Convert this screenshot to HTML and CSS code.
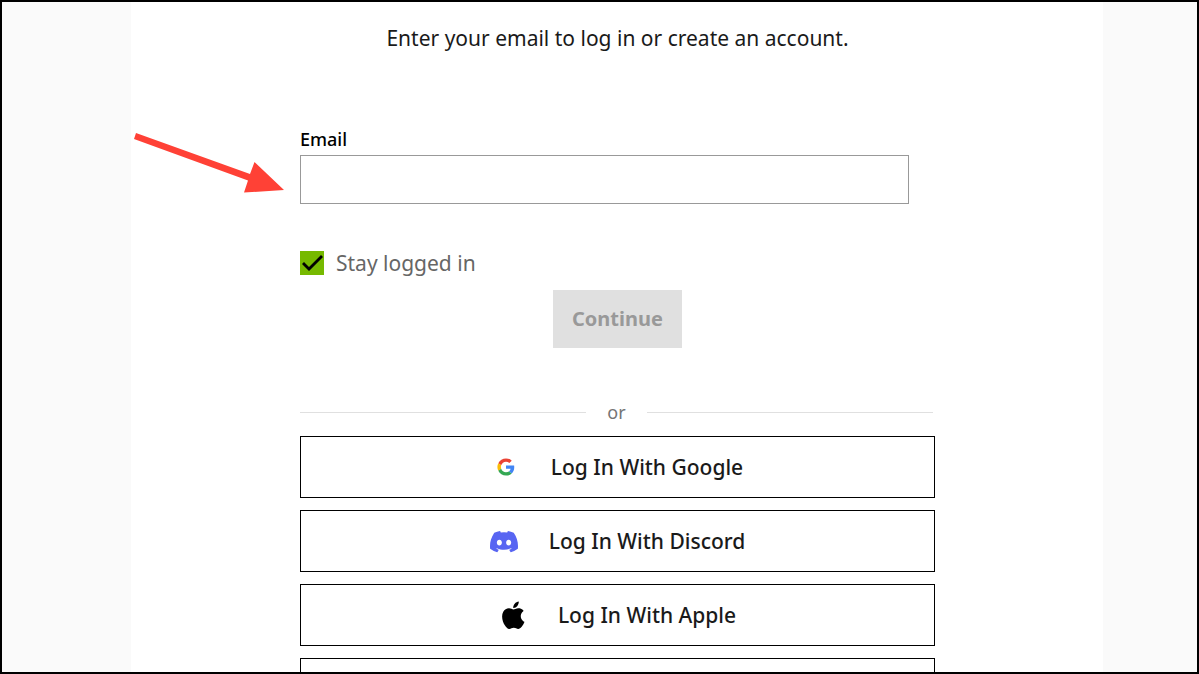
FILE: index.html
```html
<!DOCTYPE html>
<html lang="en">
<head>
    <meta charset="UTF-8">
    <meta name="viewport" content="width=device-width, initial-scale=1.0">
    <title>Log In</title>
    <link rel="stylesheet" href="styles.css">
</head>
<body>
    <main class="panel">
        <p class="intro">Enter your email to log in or create an account.</p>
        <form class="login-form">
            <label class="email-label" for="email">Email</label>
            <input class="email-input" type="email" id="email" name="email">
            <div class="stay">
                <input class="stay-check" type="checkbox" id="stay" name="stay" checked>
                <label class="stay-label" for="stay">Stay logged in</label>
            </div>
            <button class="continue" type="submit" disabled>Continue</button>
        </form>
        <div class="divider">or</div>
        <div class="providers">
            <button class="provider" type="button">
                <svg class="icon" viewBox="-15 -15 78 78" aria-hidden="true">
                    <path fill="#EA4335" d="M24 9.5c3.54 0 6.71 1.22 9.21 3.6l6.85-6.85C35.9 2.38 30.47 0 24 0 14.62 0 6.51 5.38 2.56 13.22l7.98 6.19C12.43 13.72 17.74 9.5 24 9.5z"/>
                    <path fill="#4285F4" d="M46.98 24.55c0-1.57-.15-3.09-.38-4.55H24v9.02h12.94c-.58 2.96-2.26 5.48-4.78 7.18l7.73 6c4.51-4.18 7.09-10.36 7.09-17.65z"/>
                    <path fill="#FBBC05" d="M10.53 28.59c-.48-1.45-.76-2.99-.76-4.59s.27-3.14.76-4.59l-7.98-6.19C.92 16.46 0 20.12 0 24s.92 7.54 2.56 10.78l7.97-6.19z"/>
                    <path fill="#34A853" d="M24 48c6.48 0 11.93-2.13 15.89-5.81l-7.73-6c-2.15 1.45-4.92 2.3-8.16 2.3-6.26 0-11.57-4.22-13.47-9.91l-7.98 6.19C6.51 42.62 14.62 48 24 48z"/>
                </svg>
                <span>Log In With Google</span>
            </button>
            <button class="provider" type="button">
                <svg class="icon" viewBox="0 -0.5 24 24" aria-hidden="true">
                    <path fill="#5865F2" d="M20.317 4.37a19.791 19.791 0 0 0-4.885-1.515.074.074 0 0 0-.079.037c-.21.375-.444.864-.608 1.25a18.27 18.27 0 0 0-5.487 0 12.64 12.64 0 0 0-.617-1.25.077.077 0 0 0-.079-.037A19.736 19.736 0 0 0 3.677 4.37a.07.07 0 0 0-.032.027C.533 9.046-.32 13.58.099 18.057a.082.082 0 0 0 .031.057 19.9 19.9 0 0 0 5.993 3.03.078.078 0 0 0 .084-.028 14.09 14.09 0 0 0 1.226-1.994.076.076 0 0 0-.041-.106 13.107 13.107 0 0 1-1.872-.892.077.077 0 0 1-.008-.128c.126-.094.252-.192.372-.291a.074.074 0 0 1 .077-.01c3.928 1.793 8.18 1.793 12.062 0a.074.074 0 0 1 .078.009c.12.099.246.198.373.292a.077.077 0 0 1-.006.127 12.299 12.299 0 0 1-1.873.892.077.077 0 0 0-.041.107c.36.698.772 1.362 1.225 1.993a.076.076 0 0 0 .084.028 19.839 19.839 0 0 0 6.002-3.03.077.077 0 0 0 .032-.054c.5-5.177-.838-9.674-3.549-13.66a.061.061 0 0 0-.031-.03zM8.02 15.33c-1.183 0-2.157-1.085-2.157-2.419 0-1.333.956-2.419 2.157-2.419 1.21 0 2.176 1.096 2.157 2.42 0 1.333-.956 2.418-2.157 2.418zm7.975 0c-1.183 0-2.157-1.085-2.157-2.419 0-1.333.955-2.419 2.157-2.419 1.21 0 2.176 1.096 2.157 2.42 0 1.333-.946 2.418-2.157 2.418z"/>
                </svg>
                <span>Log In With Discord</span>
            </button>
            <button class="provider" type="button">
                <svg class="icon" viewBox="-0.5 -0.5 24.500 24.500" aria-hidden="true">
                    <path d="M12.152 6.896c-.948 0-2.415-1.078-3.96-1.04-2.04.027-3.91 1.183-4.961 3.014-2.117 3.675-.546 9.103 1.519 12.09 1.013 1.454 2.208 3.09 3.792 3.039 1.52-.065 2.09-.987 3.935-.987 1.831 0 2.35.987 3.96.948 1.637-.026 2.676-1.48 3.676-2.948 1.156-1.688 1.636-3.325 1.662-3.415-.039-.013-3.182-1.221-3.22-4.857-.026-3.04 2.48-4.494 2.597-4.559-1.429-2.09-3.623-2.324-4.39-2.376-2-.156-3.675 1.09-4.61 1.09zM15.53 3.83c.843-1.012 1.4-2.427 1.245-3.83-1.207.052-2.662.805-3.532 1.818-.78.896-1.454 2.338-1.273 3.714 1.338.104 2.715-.688 3.559-1.701"/>
                </svg>
                <span>Log In With Apple</span>
            </button>
            <button class="provider" type="button" aria-label="More options"></button>
        </div>
    </main>
    <!-- Arrow pointing at the email box -->
    <svg class="arrow" viewBox="0 0 152 62" aria-hidden="true">
        <path fill="#FF4136" d="M3 1L117 42L121.500 30L151 58L111 60.500L115 48.500L1 7z"/>
    </svg>
</body>
</html>
```

FILE: styles.css
```css
* {
    box-sizing: border-box;
}
body {
    font-family: "Noto Sans", sans-serif;
    font-size: 21px;
    line-height: 28px;
    color: #1a1a1a;
    background-color: #fafafa;
    margin: 0;
    height: 100vh;
    border: 2px solid #000;
    position: relative;
    overflow: hidden;
}
.panel {
    background-color: #fff;
    margin: 0 94px 0 129px;
    padding: 22px 168px 0 169px;
}
.intro {
    margin: 0;
    text-align: center;
}
.login-form {
    display: flex;
    flex-direction: column;
    margin-top: 73px;
}
.email-label {
    margin-bottom: 2px;
    font-size: 18px;
    font-weight: 500;
    color: #000;
}
.email-input {
    height: 49px;
    margin-right: 26px;
    padding: 0 12px;
    border: 1px solid #999;
    background-color: #fff;
    font: inherit;
}
.stay {
    display: flex;
    align-items: center;
    gap: 12px;
    margin-top: 45px;
    color: #666;
}
.stay-check {
    appearance: none;
    width: 24px;
    height: 24px;
    margin: 0;
    background-color: #76b900;
    position: relative;
}
.stay-check:checked::after {
    content: "";
    position: absolute;
    inset: 0;
    background-color: #000;
    clip-path: polygon(2px 13px, 4px 11px, 9px 16px, 21px 4px, 23px 6px, 9px 20px);
}
.continue {
    align-self: center;
    height: 58px;
    margin-top: 13px;
    padding: 0 19px;
    border: none;
    background-color: #e0e0e0;
    color: #999;
    font: inherit;
    font-size: 20px;
    font-weight: 700;
}
.divider {
    display: flex;
    align-items: center;
    gap: 21px;
    margin-top: 50px;
    padding-right: 2px;
    font-size: 18px;
    color: #757575;
}
.divider::before,
.divider::after {
    content: "";
    flex: 1;
    height: 1px;
    background-color: #e0e0e0;
}
.providers {
    display: flex;
    flex-direction: column;
    gap: 12px;
    margin-top: 10px;
}
.provider {
    display: flex;
    align-items: center;
    justify-content: center;
    gap: 31px;
    height: 62px;
    padding: 0;
    border: 1px solid #000;
    background-color: #fff;
    color: #1a1a1a;
    font: inherit;
    font-weight: 500;
}
.icon {
    width: 28px;
    height: 28px;
}
.arrow {
    position: absolute;
    left: 131px;
    top: 130px;
    width: 152px;
    height: 62px;
}
```
